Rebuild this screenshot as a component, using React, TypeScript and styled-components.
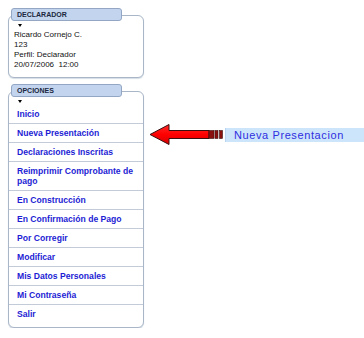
import styled, { createGlobalStyle } from "styled-components";

const GlobalStyle = createGlobalStyle`
  body {
    margin: 0;
    background: #ffffff;
    font-family: "Liberation Sans", Arial, sans-serif;
  }
`;

const menuItems = [
  "Inicio",
  "Nueva Presentación",
  "Declaraciones Inscritas",
  "Reimprimir Comprobante de pago",
  "En Construcción",
  "En Confirmación de Pago",
  "Por Corregir",
  "Modificar",
  "Mis Datos Personales",
  "Mi Contraseña",
  "Salir",
];

function Panel({ title, children }: { title: string; children: React.ReactNode }) {
  return (
    <PanelWrap>
      <Tab>{title}</Tab>
      <Box>
        <Marker />
        {children}
      </Box>
    </PanelWrap>
  );
}

export default function App() {
  return (
    <>
      <GlobalStyle />
      <Page>
        <Sidebar>
          <Panel title="DECLARADOR">
            <UserInfo>
              <div>Ricardo Cornejo C.</div>
              <div>123</div>
              <div>Perfil: Declarador</div>
              <div>20/07/2006&nbsp;&nbsp;12:00</div>
            </UserInfo>
          </Panel>
          <Panel title="OPCIONES">
            <Menu>
              {menuItems.map((item) => (
                <MenuItem key={item}>
                  <a href="#">{item}</a>
                </MenuItem>
              ))}
            </Menu>
          </Panel>
        </Sidebar>
        <Callout>
          <svg width="75" height="23" viewBox="0 0 75 23">
            <defs>
              <linearGradient id="redShade" x1="0" y1="0" x2="0" y2="1">
                <stop offset="0" stopColor="#ff2a2a" />
                <stop offset="0.5" stopColor="#ff0000" />
                <stop offset="1" stopColor="#d40000" />
              </linearGradient>
            </defs>
            <path
              d="M1 11.5 L20 1.5 L20 7.5 L60 7.5 L60 15.5 L20 15.5 L20 21.5 Z"
              fill="url(#redShade)"
              stroke="#3a1010"
              strokeWidth="1"
            />
            <rect x="60" y="7.5" width="5" height="8" fill="#8a1010" stroke="#3a1010" strokeWidth="0.6" />
            <rect x="66" y="7.5" width="3" height="8" fill="#8a1010" stroke="#3a1010" strokeWidth="0.6" />
            <rect x="70.5" y="7.5" width="3" height="8" fill="#8a1010" stroke="#3a1010" strokeWidth="0.6" />
          </svg>
          <CalloutLabel>Nueva Presentacion</CalloutLabel>
        </Callout>
      </Page>
    </>
  );
}

const Page = styled.div`
  display: flex;
  align-items: flex-start;
  padding: 8px 0 0 8px;
`;

const Sidebar = styled.div`
  width: 136px;
  display: flex;
  flex-direction: column;
  gap: 6px;
`;

const PanelWrap = styled.div`
  display: flex;
  flex-direction: column;
`;

const Tab = styled.div`
  position: relative;
  z-index: 1;
  margin-left: 3px;
  width: 104px;
  height: 11px;
  padding-left: 5px;
  background: #c3d5ee;
  border: 1px solid #93a7c4;
  border-radius: 3px;
  font-size: 7px;
  font-weight: bold;
  line-height: 11px;
  color: #1b2740;
`;

const Box = styled.div`
  margin-top: -6px;
  border: 1px solid #a8b6c8;
  border-radius: 6px;
  box-shadow: 0 1px 1px #d6dde6;
  background: #ffffff;
  padding-top: 8px;
`;

const Marker = styled.div`
  width: 0;
  height: 0;
  margin-left: 9px;
  border-left: 2px solid transparent;
  border-right: 2px solid transparent;
  border-top: 3px solid #000000;
`;

const UserInfo = styled.div`
  padding: 3px 0 7px 5px;
  font-size: 8px;
  line-height: 10px;
  color: #111111;
`;

const Menu = styled.ul`
  list-style: none;
  margin: 0;
  padding: 2px 0 4px 0;
`;

const MenuItem = styled.li`
  padding: 4px 8px 4px 8px;
  border-bottom: 1px solid #c2cbd7;
  font-size: 8.6px;
  font-weight: bold;
  line-height: 10px;

  &:last-child {
    border-bottom: none;
  }

  a {
    color: #1d1dd4;
    text-decoration: none;
  }
`;

const Callout = styled.div`
  display: flex;
  align-items: center;
  margin: 115px 0 0 5px;
  flex: 1;
`;

const CalloutLabel = styled.div`
  flex: 1;
  height: 14px;
  margin-left: 1px;
  padding-left: 8px;
  background: #cde5fb;
  border-left: 1px solid #b8d4f0;
  font-size: 11px;
  line-height: 14px;
  letter-spacing: 0.6px;
  color: #2f2fe0;
  white-space: nowrap;
`;
